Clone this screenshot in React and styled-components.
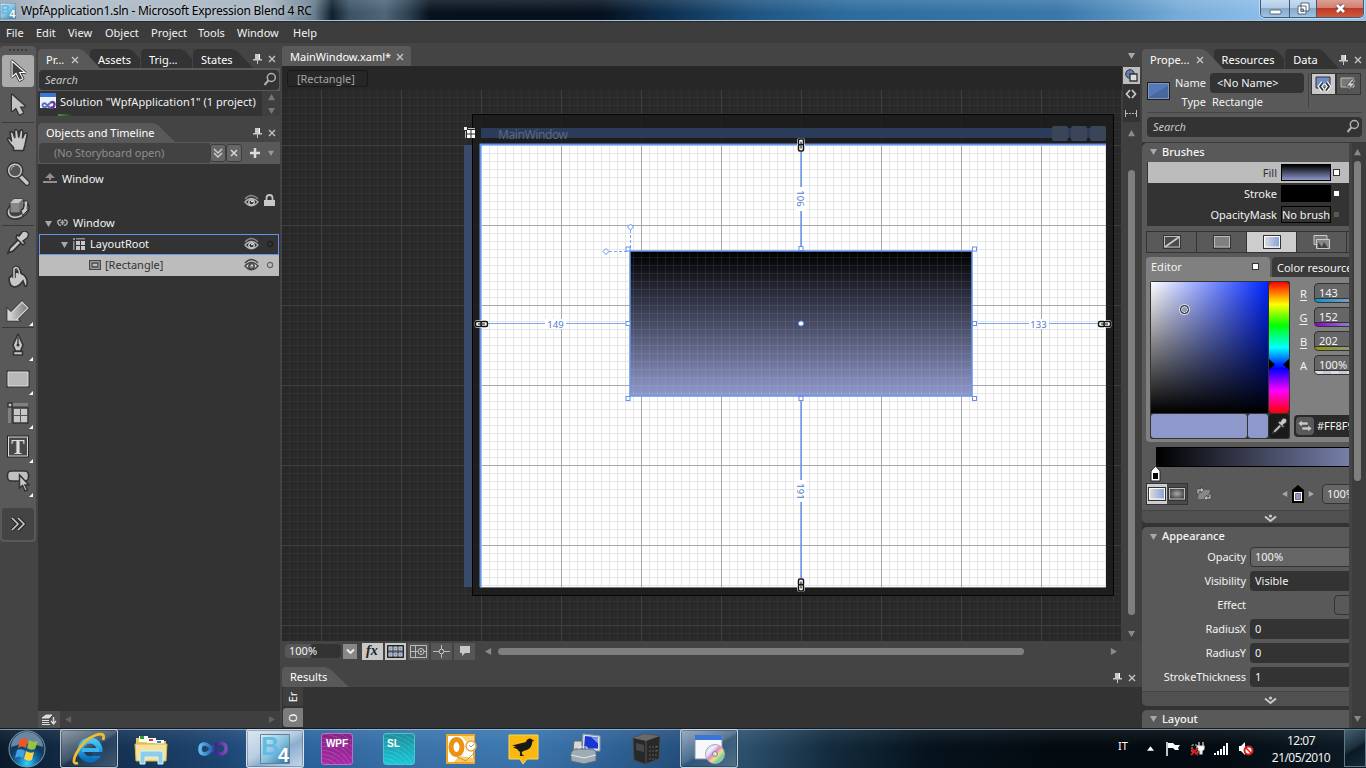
import React from "react";
import styled, { createGlobalStyle, css } from "styled-components";

const Global = createGlobalStyle`
  * { box-sizing: border-box; }
  body { margin: 0; background: #444; overflow: hidden; }
  svg { display: block; flex: none; }
`;

const c = {
  base: "#444444",
  panel: "#595959",
  dark: "#333333",
  light: "#bcbcbc",
  text: "#f2f2f2",
  blue: "#6494ed",
};

const Shell = styled.div`
  width: 1366px;
  height: 768px;
  display: flex;
  flex-direction: column;
  overflow: hidden;
  background: ${c.base};
  color: ${c.text};
  font-family: "Noto Sans", "Open Sans", sans-serif;
  font-size: 11px;
  line-height: 16px;
  white-space: nowrap;
`;

/* ---------- title bar ---------- */
const TitleBar = styled.header`
  height: 22px;
  flex: none;
  display: flex;
  align-items: flex-start;
  border-bottom: 1px solid #202a33;
  box-shadow: inset 0 -1px 0 #b3c1cc;
  background:
    linear-gradient(rgba(255, 255, 255, 0.12), rgba(255, 255, 255, 0) 60%),
    linear-gradient(90deg, #91a2b2 0, #aebbc7 60px, #a3b1be 270px, #65798b 315px, #10202e 332px, #3d5366 350px, #4e6678 385px, #2d4252 408px, #07121d 430px, #05111e 600px, #0c2c4b 660px, #1f5480 750px, #2e6c9f 850px, #3a77aa 1060px, #5590bf 1120px, #78acd8 1180px, #91c3ef 1290px, #8cbdeb 1366px);
`;
const AppIcon = styled.div`
  padding-top: 3px;
`;
const AppTitle = styled.h1`
  margin: 3px auto 0 5px;
  font-size: 12px;
  font-weight: 400;
  line-height: 16px;
  letter-spacing: -0.24px;
  color: #000;
  text-shadow: 0 0 6px rgba(255, 255, 255, 0.7);
`;
const CaptionButtons = styled.div`
  display: flex;
  width: 104px;
  height: 18px;
  margin-right: 2px;
  border: 1px solid #43596e;
  border-top: 0;
  border-radius: 0 0 5px 5px;
  overflow: hidden;
  box-shadow: 0 0 0 1px rgba(220, 238, 255, 0.6);
`;
const CaptionButton = styled.div`
  width: ${(p) => p.$w}px;
  display: flex;
  align-items: center;
  justify-content: center;
  border-left: ${(p) => (p.$first ? 0 : "1px solid #43596e")};
  background: ${(p) =>
    p.$close
      ? "linear-gradient(#dca096, #d08070 45%, #bd3a24 50%, #cf5a3b)"
      : "linear-gradient(#c8dcf0, #b1cce6 45%, #86aacb 50%, #9dc3e5)"};
`;

/* ---------- menu ---------- */
const MenuBar = styled.nav`
  height: 21px;
  flex: none;
  display: grid;
  grid-template-columns: 30px 32px 37px 46px 47px 39px 56px 40px;
  padding: 3px 0 0 6px;
  background: #3c3c3c;
`;

const Body = styled.div`
  height: 685px;
  flex: none;
  display: flex;
`;

/* ---------- tool strip ---------- */
const Tools = styled.aside`
  width: 38px;
  padding-top: 3px;
`;
const ToolStrip = styled.div`
  width: 36px;
  height: 496px;
  background: ${c.panel};
  border-radius: 4px;
  display: flex;
  flex-direction: column;
  align-items: center;
  padding-top: 3px;
`;
const Grip = styled.div`
  width: 18px;
  height: 2px;
  margin: 0 0 4px;
  background: repeating-linear-gradient(90deg, #3a3a3a 0 2px, transparent 2px 4px);
`;
const Tool = styled.div`
  width: 32px;
  height: ${(p) => p.$h || 34}px;
  margin-top: ${(p) => p.$top || 0}px;
  flex: none;
  display: flex;
  align-items: center;
  justify-content: center;
  position: relative;
  border-radius: 3px;
  background: ${(p) => (p.$active ? "#ababab" : p.$more ? "#444" : "transparent")};
  ${(p) =>
    p.$flyout &&
    css`
      &::after {
        content: "";
        position: absolute;
        right: 1px;
        bottom: 1px;
        border: 2.5px solid transparent;
        border-right-color: #fff;
        border-bottom-color: #fff;
      }
    `}
`;
const ToolRule = styled.div`
  width: 32px;
  height: 1px;
  flex: none;
  background: #3a3a3a;
`;

/* ---------- shared panel parts ---------- */
const TabRow = styled.div`
  display: flex;
  align-items: flex-end;
  height: ${(p) => p.$h}px;
  flex: none;
`;
const Tab = styled.div`
  width: ${(p) => p.$w}px;
  height: ${(p) => p.$h || 19}px;
  padding: ${(p) => p.$top || 3}px 0 0 ${(p) => p.$pad || 8}px;
  margin-right: ${(p) => p.$gap || 0}px;
  position: relative;
  z-index: ${(p) => (p.$active ? 1 : 0)};
  color: #fff;
  background: ${(p) => (p.$active ? c.panel : "#333")};
  display: flex;
  gap: 7px;
  clip-path: polygon(
    0 4px, 1px 1px, 4px 0,
    calc(100% - ${(p) => p.$slant}px - 4px) 0,
    calc(100% - ${(p) => p.$slant}px + 1px) 2px,
    100% ${(p) => (p.$slant > 10 ? "100%" : "10px")},
    100% 100%, 0 100%
  );
`;
const PanelTools = styled.div`
  display: flex;
  align-items: center;
  gap: 6px;
  height: 19px;
  margin-left: auto;
  padding-right: ${(p) => p.$r || 4}px;
`;
const SearchBox = styled.div`
  height: 20px;
  flex: none;
  display: flex;
  align-items: center;
  justify-content: space-between;
  padding: 0 2px 1px 6px;
  margin-top: ${(p) => p.$top || 0}px;
  border-radius: 4px;
  background: ${c.dark};
  color: #c8c8c8;
  font-style: italic;
`;

/* ---------- left column ---------- */
const Left = styled.section`
  width: 242px;
  display: flex;
  flex-direction: column;
  flex: none;
`;
const SearchWrap = styled.div`
  background: ${c.panel};
  padding: 2px 1px 1px;
  flex: none;
`;
const SolutionRow = styled.div`
  height: 25px;
  flex: none;
  display: flex;
  background: ${c.dark};
`;
const SolutionItem = styled.div`
  width: 224px;
  height: 25px;
  display: flex;
  gap: 4px;
  padding: 2px 0 0 2px;
  background: linear-gradient(90deg, #3f9a2c, #333) 20px 100% / 14px 2px no-repeat;
  span { padding-top: 1px; letter-spacing: 0.04px; }
`;
const SpinColumn = styled.div`
  flex: 1;
  background: #3f3f3f;
  display: flex;
  flex-direction: column;
  align-items: center;
  gap: 6px;
  padding-top: 3px;
`;
const Storyboard = styled.div`
  height: 22px;
  flex: none;
  background: ${c.panel};
  padding: 1px 6px 1px 1px;
  display: flex;
  align-items: center;
`;
const StoryName = styled.div`
  width: 171px;
  height: 20px;
  background: #424242;
  border-radius: 4px 0 0 4px;
  color: #8e8e8e;
  padding: 2px 0 0 15px;
  letter-spacing: -0.05px;
`;
const StoryButton = styled.div`
  width: 16px;
  height: 18px;
  display: flex;
  align-items: center;
  justify-content: center;
  border: 1px solid #3d3d3d;
  border-radius: 3px;
  background: #666;
`;
const Tree = styled.div`
  flex: 1;
  background: ${c.dark};
  padding: 4px 1px 0;
`;
const TreeRow = styled.div`
  display: flex;
  align-items: center;
  gap: ${(p) => p.$gap || 5}px;
  padding: 0 ${(p) => p.$right || 4}px ${(p) => p.$lift || 0}px ${(p) => p.$indent}px;
  border: ${(p) => (p.$outline ? `1px solid ${c.blue}` : "0")};
  background: ${(p) => (p.$active ? c.light : "transparent")};
  color: ${(p) => (p.$active ? "#333" : c.text)};
  height: ${(p) => p.$h || 21}px;
`;
const RowEnd = styled.div`
  margin-left: auto;
  display: flex;
  align-items: center;
  gap: ${(p) => p.$gap || 6}px;
`;
const LeftFoot = styled.div`
  height: 17px;
  flex: none;
  display: flex;
  align-items: center;
  justify-content: space-between;
  background: #3f3f3f;
  padding-right: 5px;
`;
const FootStart = styled.div`
  display: flex;
  align-items: center;
  gap: 5px;
`;
const FootButton = styled.div`
  width: 22px;
  height: 17px;
  background: #505050;
  display: flex;
  align-items: center;
  justify-content: center;
`;

/* ---------- center ---------- */
const Center = styled.main`
  width: 860px;
  margin-left: 2px;
  flex: none;
  display: flex;
  flex-direction: column;
`;
const DocArea = styled.div`
  display: flex;
  height: 598px;
  flex: none;
`;
const Doc = styled.div`
  width: 840px;
  flex: none;
  display: flex;
  flex-direction: column;
`;
const DocTab = styled.div`
  width: 129px;
  height: 20px;
  margin-top: 3px;
  padding: 3px 0 0 8px;
  border-radius: 2px 3px 0 0;
  background: ${c.panel};
  color: #fff;
  display: flex;
  gap: 5px;
`;
const Crumbs = styled.div`
  height: 24px;
  padding: 4px 5px;
  background: #272727;
`;
const Crumb = styled.div`
  width: 81px;
  height: 17px;
  border: 1px solid #191919;
  border-radius: 3px;
  color: #a4a4a4;
  line-height: 16px;
  padding-left: 9px;
  letter-spacing: -0.05px;
`;
const ViewStrip = styled.div`
  flex: 1;
  display: flex;
  flex-direction: column;
  align-items: center;
  background: linear-gradient(${c.base} 23px, #404040 23px);
  padding: 9px 2px 4px 0;
`;
const ViewButtons = styled.div`
  margin: 8px 0 8px;
`;
const ViewButton = styled.div`
  width: 17px;
  height: ${(p) => p.$h}px;
  flex: none;
  display: flex;
  align-items: center;
  justify-content: center;
  background: ${(p) => (p.$on ? "#bdbdbd" : "#333")};
`;
const VThumb = styled.div`
  width: 7px;
  height: ${(p) => p.$h}px;
  margin: ${(p) => p.$top}px 0 auto;
  flex: none;
  border-radius: 4px;
  background: #7f7f7f;
`;
const HThumb = styled.div`
  width: 526px;
  height: 7px;
  margin: 0 86px 0 6px;
  border-radius: 4px;
  background: #7f7f7f;
`;
const CanvasBar = styled.div`
  height: 20px;
  flex: none;
  display: flex;
  align-items: center;
  padding-left: 3px;
`;
const ZoomBox = styled.div`
  width: 56px;
  height: 14px;
  border-radius: 4px;
  padding-left: 4px;
  line-height: 14px;
  background: linear-gradient(90deg, #575757 25px, #333 27px);
`;
const BarButton = styled.div`
  width: ${(p) => p.$w || 21}px;
  height: ${(p) => p.$h || 17}px;
  margin: 0 ${(p) => p.$mr || 0}px 0 ${(p) => p.$ml || 2}px;
  display: flex;
  align-items: center;
  justify-content: center;
  background: ${(p) => (p.$on ? "#c8c8c8" : p.$drop ? "#888" : "#565656")};
`;
const ResultsBody = styled.div`
  flex: 1;
  display: flex;
  flex-direction: column;
  gap: 2px;
  padding-left: 1px;
  background: ${c.dark};
`;
const SideTab = styled.div`
  width: 20px;
  height: 19px;
  display: flex;
  align-items: center;
  justify-content: center;
  border-radius: 3px 0 0 3px;
  background: ${(p) => (p.$on ? "#7c7c7c" : "#3f3f3f")};
  color: #fff;
  span { transform: rotate(-90deg); font-size: 11px; line-height: 10px; }
`;

/* ---------- right column ---------- */
const Right = styled.section`
  width: 224px;
  flex: none;
  display: flex;
  flex-direction: column;
`;
const Identity = styled.div`
  height: 73px;
  flex: none;
  background: ${c.panel};
  padding: 4px 4px 0 5px;
`;
const IdentityTop = styled.div`
  height: 40px;
  display: flex;
  border-bottom: 1px solid #444;
`;
const TypeSwatch = styled.div`
  width: 23px;
  height: 18px;
  margin-top: 9px;
  border: 1px solid #1d1d1d;
  box-shadow: inset 0 0 0 1px #8194bd;
  background: linear-gradient(150deg, #5379b9 50%, #49679f 52%);
`;
const NameGrid = styled.div`
  display: grid;
  grid-template-columns: 36px 94px;
  grid-template-rows: 21px 17px;
  column-gap: 4px;
  text-align: right;
  line-height: 20px;
  & > :nth-child(even) { text-align: left; }
  & > :nth-child(n + 3) { line-height: 16px; }
  & > :nth-child(4) { padding-left: 2px; }
`;
const NameInput = styled.div`
  height: 20px;
  border-radius: 4px;
  background: ${c.dark};
  padding-left: 7px;
`;
const Modes = styled.div`
  display: flex;
  margin-left: 4px;
  padding-left: 2px;
  height: 35px;
  border-left: 1px solid #444;
`;
const Mode = styled.div`
  width: 25px;
  height: 22px;
  display: flex;
  align-items: center;
  justify-content: center;
  border: 1px solid #353535;
  background: ${(p) => (p.$on ? "#c9c9c9" : "#555")};
`;
const PropScroll = styled.div`
  flex: 1;
  min-height: 0;
  display: flex;
  border-top: 1px solid #3a3a3a;
`;
const Props = styled.div`
  width: 207px;
  flex: none;
  overflow: hidden;
  background: ${c.dark};
`;
const ScrollRail = styled.div`
  width: 17px;
  background: linear-gradient(90deg, #444 3px, #3c3c3c 3px);
  display: flex;
  flex-direction: column;
  align-items: center;
  padding: 6px 0 6px;
`;
const Section = styled.div`
  height: ${(p) => p.$h}px;
  margin-bottom: 4px;
  border-radius: 5px 0 0 5px;
  background: ${c.panel};
  overflow: hidden;
`;
const SectionHead = styled.div`
  height: ${(p) => p.$h || 19}px;
  display: flex;
  align-items: center;
  gap: 5px;
  padding: 0 0 2px 8px;
  color: #f5f5f5;
  font-weight: 500;
`;
const BrushList = styled.div`
  margin-left: 5px;
  height: 64px;
  border-left: 1px solid #333;
  background: ${c.dark};
`;
const BrushRow = styled.div`
  height: 21px;
  display: flex;
  align-items: center;
  justify-content: flex-end;
  gap: 4px;
  padding-right: 9px;
  background: ${(p) => (p.$on ? c.light : "transparent")};
  color: ${(p) => (p.$on ? "#333" : c.text)};
`;
const BrushWell = styled.div`
  width: 50px;
  height: 17px;
  border: 1px solid #000;
  background: ${(p) => p.$bg};
  color: #f2f2f2;
  text-align: center;
  line-height: 15px;
`;
const Marker = styled.div`
  width: 7px;
  height: 7px;
  margin-left: -2px;
  border: 1px solid #333;
  background: ${(p) => (p.$off ? "#595959" : "#fff")};
`;
const BrushTabs = styled.div`
  height: 22px;
  width: 230px;
  margin: 5px 0 4px 4px;
  display: flex;
  background: #333;
  padding: 1px;
  gap: 1px;
`;
const BrushTab = styled.div`
  width: 49px;
  flex: none;
  display: flex;
  align-items: center;
  justify-content: center;
  background: ${(p) => (p.$on ? "#cdcdcd" : "#595959")};
`;
const EditorTabs = styled.div`
  display: flex;
  height: 20px;
  margin-left: 4px;
  gap: 2px;
`;
const EditorTab = styled.div`
  width: 124px;
  flex: none;
  padding: ${(p) => (p.$on ? 0 : 2)}px 11px ${(p) => (p.$on ? 1 : 0)}px 5px;
  border-radius: 4px 4px 0 0;
  background: ${(p) => (p.$on ? "#808080" : "#3a3a3a")};
  display: flex;
  align-items: center;
  justify-content: space-between;
`;
const Editor = styled.div`
  height: 165px;
  margin-left: 4px;
  padding: 4px 0 0 4px;
  border-radius: 0 0 0 4px;
  background: #808080;
  display: flex;
`;
const Picker = styled.div`
  width: 140px;
  height: 158px;
  flex: none;
  display: grid;
  grid-template-columns: 117px 20px;
  grid-template-rows: 131px 24px;
  gap: 1px;
  padding: 1px;
  background: #333;
  border-radius: 2px;
`;
const Spectrum = styled.div`
  position: relative;
  background: linear-gradient(transparent, #000), linear-gradient(90deg, #fff, #0026ff);
`;
const PickRing = styled.div`
  position: absolute;
  left: 29px;
  top: 23px;
  width: 9px;
  height: 9px;
  border: 1.5px solid #222;
  border-radius: 50%;
  box-shadow: 0 0 0 1px #ddd, inset 0 0 0 1px #ddd;
`;
const Hue = styled.div`
  border-radius: 4px;
  background: linear-gradient(#f00, #ff0 17%, #0f0 33%, #0ff 50%, #00f 66%, #f0f 83%, #f00);
  display: flex;
  justify-content: space-between;
  padding-top: 77px;
`;
const Swatches = styled.div`
  display: grid;
  grid-template-columns: 96px 20px;
  gap: 1px;
`;
const Swatch = styled.div`
  border-radius: 3px;
  background: #8f98ca;
`;
const Dropper = styled.div`
  border-radius: 3px;
  background: #1a1a1a;
  display: flex;
  align-items: center;
  justify-content: center;
`;
const Channels = styled.div`
  margin-left: 4px;
  padding-top: 2px;
  display: flex;
  flex-direction: column;
  gap: 4px;
`;
const Channel = styled.div`
  display: flex;
  height: 20px;
  width: 90px;
  line-height: 21px;
  span {
    width: 20px;
    text-align: center;
    padding-right: 1px;
    text-decoration: ${(p) => (p.$plain ? "none" : "underline")};
    text-underline-offset: 2px;
  }
`;
const ChannelValue = styled.div`
  flex: 1;
  padding-left: 4px;
  line-height: 18px;
  border: 1px solid #333;
  border-radius: 4px;
  background: linear-gradient(#666 14px, #333 14px, #333 15px, transparent 15px), ${(p) => p.$bar};
`;
const HexRow = styled.div`
  width: 90px;
  height: 22px;
  margin-top: auto;
  margin-bottom: 5px;
  display: flex;
  align-items: center;
  gap: 3px;
  padding: 1px 2px;
  border-radius: 4px;
  background: #2a2a2a;
`;
const HexIcon = styled.div`
  width: 18px;
  height: 18px;
  border-radius: 4px;
  background: #595959;
  display: flex;
  align-items: center;
  justify-content: center;
`;
const GradientBar = styled.div`
  height: 20px;
  width: 266px;
  margin: 5px 0 0 14px;
  border: 1px solid #000;
  background: linear-gradient(90deg, #000, #8f98ca 230px);
`;
const Stops = styled.div`
  height: 16px;
  padding-left: 8px;
  margin-top: -1px;
`;
const GradientTools = styled.div`
  width: 320px;
  height: 22px;
  display: flex;
  align-items: center;
  padding-left: 4px;
  gap: 8px;
  margin-top: 1px;
`;
const Segmented = styled.div`
  display: flex;
  flex: none;
  width: 42px;
  height: 22px;
  padding: 1px;
  background: #333;
`;
const Segment = styled.div`
  flex: 1;
  display: flex;
  align-items: center;
  justify-content: center;
  background: ${(p) => (p.$on ? "#cdcdcd" : "#4a4a4a")};
`;
const StopNav = styled.div`
  display: flex;
  align-items: center;
  gap: 4px;
  margin-left: 62px;
`;
const Field = styled.div`
  width: 130px;
  height: 20px;
  flex: none;
  padding-left: ${(p) => (p.$plain ? 5 : 4)}px;
  line-height: ${(p) => (p.$plain ? 20 : 18)}px;
  border-radius: 4px;
  border: ${(p) => (p.$plain ? "0" : "1px solid #333")};
  background: ${(p) => (p.$plain ? c.dark : p.$bg || "#666")};
  margin-left: ${(p) => p.$ml || 0}px;
`;
const Expander = styled.div`
  height: ${(p) => p.$h}px;
  margin-top: ${(p) => p.$top}px;
  padding: 1px 0 0 50px;
  display: flex;
  align-items: center;
  justify-content: center;
  border-top: 1px solid #444;
  background: #505050;
`;
const PropRow = styled.div`
  display: flex;
  height: 20px;
  margin-bottom: 4px;
  gap: 4px;
  label { width: 104px; flex: none; text-align: right; line-height: 20px; letter-spacing: -0.08px; }
`;

/* ---------- task bar ---------- */
const TaskBar = styled.footer`
  height: 40px;
  flex: none;
  display: flex;
  border-top: 1px solid #111c27;
  box-shadow: inset 0 1px 0 rgba(190, 215, 235, 0.6);
  background:
    linear-gradient(rgba(255, 255, 255, 0.08), transparent 45%, rgba(0, 0, 0, 0.05)),
    linear-gradient(90deg, #0a1b2c 0, #112a43 60px, #163456 125px, #1e4674 220px, #2c659f 310px, #3b73aa 400px, #3c78b0 520px, #306398 610px, #244e79 690px, #2d506d 745px, #132c3e 830px, #06131d 930px, #030a10 1060px, #030b12 1220px, #0d1c26 1366px);
`;
const StartSlot = styled.div`
  width: 60px;
  padding: 1px 0 0 8px;
`;
const TaskButton = styled.div`
  width: 58px;
  height: 39px;
  margin-right: 4px;
  display: flex;
  align-items: center;
  justify-content: center;
  border-radius: 3px;
  ${(p) =>
    p.$state &&
    css`
      border: 1px solid rgba(220, 235, 250, 0.75);
      box-shadow: inset 0 0 0 1px rgba(0, 0, 0, 0.25);
      background: ${p.$state === "active"
        ? "linear-gradient(150deg, #dce7f2, #b8cde2 45%, #8dadce 60%, #c4d8ec)"
        : "linear-gradient(150deg, rgba(255,255,255,.5), rgba(255,255,255,.2) 48%, rgba(255,255,255,.06) 54%, rgba(255,255,255,.2))"};
    `}
`;
const AppTile = styled.div`
  width: 32px;
  height: 32px;
  border-radius: 3px;
  border: 1px solid ${(p) => p.$edge};
  background: repeating-radial-gradient(circle at 0 44px, transparent 0 3px, rgba(255, 255, 255, 0.12) 3px 4px), ${(p) => p.$bg};
  color: #fff;
  font: bold 10px/19px "Liberation Sans", sans-serif;
  text-align: ${(p) => p.$align || "center"};
  padding-left: ${(p) => (p.$align ? 3 : 0)}px;
`;
const Tray = styled.div`
  margin-left: auto;
  width: 151px;
  display: flex;
  align-items: center;
  color: #fff;
  font-size: 11px;
`;
const Lang = styled.span`
  width: 29px;
  margin-top: -6px;
`;
const TrayIcons = styled.div`
  display: flex;
  align-items: center;
  gap: 9px;
  & > :nth-child(2) { margin-left: 3px; }
`;
const Clock = styled.div`
  width: 64px;
  padding-top: 3px;
  text-align: center;
  line-height: 17px;
  letter-spacing: -0.55px;
  font-size: 12px;
`;
const ShowDesktop = styled.div`
  width: 22px;
  height: 38px;
  margin-left: 11px;
  border: 1px solid #607887;
  background: linear-gradient(150deg, #48606f, #1e323f 45%, #0b1a24 55%, #162a36);
`;

/* ---------- icons ---------- */
const Close = ({ s = 8, col = "#c4c4c4" }) => (
  <svg width={s} height="16" viewBox="0 0 8 16"><path d="M1 5l6 6M7 5l-6 6" stroke={col} strokeWidth="1.4" fill="none" /></svg>
);
const Pin = () => (
  <svg width="9" height="12" viewBox="0 0 9 12"><path d="M2 1h5v5H2zM0 6h9v1.5H0zM4 7h1v4H4z" fill="#c8c8c8" /><path d="M6 1h1v5H6z" fill="#fff" /></svg>
);
const Tri = ({ d = "down", col = "#a8a8a8", s = 7 }) => {
  const paths = { down: "M0 1h8L4 8z", up: "M0 7h8L4 0z", left: "M7 0v8L0 4z", right: "M1 0v8l7-4z" };
  return <svg width={s} height={s} viewBox="0 0 8 8"><path d={paths[d]} fill={col} /></svg>;
};
const HueArrow = ({ flip }) => (
  <svg width="6" height="11" viewBox="0 0 6 11"><path d={flip ? "M6 0v11L0 5.500z" : "M0 0v11l6-5.500z"} fill="#000" /></svg>
);
const Lens = () => (
  <svg width="14" height="15" viewBox="0 0 14 15" fill="none" stroke="#b0b0b0" strokeWidth="1.5"><circle cx="8.3" cy="5.5" r="4" /><path d="M5.3 8.5L1.5 13" strokeWidth="2" /></svg>
);
const Eye = ({ on }) => (
  <svg width="15" height="14" viewBox="0 0 15 14">
    <path d="M1 5Q7.500-2 14 5" fill="none" stroke={on ? "#444" : "#8a8a8a"} strokeWidth="1.300" />
    <path d="M1 8Q7.500 1 14 8Q7.500 15.500 1 8z" fill={on ? "#dadada" : "#2c2c2c"} stroke={on ? "#444" : "#b4b4b4"} strokeWidth="1.400" />
    <circle cx="7.500" cy="8.300" r="3.400" fill={on ? "#484848" : "#c4c4c4"} />
    <circle cx="7.500" cy="8.300" r="1.900" fill={on ? "#888" : "#333"} />
    <circle cx="8" cy="7.300" r="0.900" fill="#fff" />
  </svg>
);
const Lock = () => (
  <svg width="11" height="13" viewBox="0 0 11 13"><path d="M2.500 6V4a3 3 0 016 0v2" fill="none" stroke="#c4c4c4" strokeWidth="1.800" /><path d="M0 6h11v6H0z" fill="#c8c8c8" /></svg>
);
const Dot = ({ col }) => (
  <svg width="8" height="8" viewBox="0 0 8 8"><circle cx="4" cy="4" r="2.600" fill="none" stroke={col} strokeWidth="1.200" /></svg>
);
const LayoutGrid = () => (
  <svg width="12" height="12" viewBox="0 0 12 12"><path d="M0 0h2v2H0zM3 0h9v1.500H3zM0 3h1.500v9H0z" fill="#909090" /><path d="M3 3h4v4H3zM8 3h4v4H8zM3 8h4v4H3zM8 8h4v4H8z" fill="#c8c8c8" /></svg>
);
const Chev = () => (
  <svg width="13" height="9" viewBox="0 0 13 9"><path d="M1 2.500L6.500 7 12 2.500" fill="none" stroke="#c8c8c8" strokeWidth="2" /><circle cx="6.500" cy="2" r="1.600" fill="#c8c8c8" /></svg>
);
const DropChev = () => (
  <svg width="9" height="7" viewBox="0 0 9 7"><path d="M1 1.500l3.500 3.500L8 1.500" fill="none" stroke="#f0f0f0" strokeWidth="1.800" /></svg>
);
const Arrow = ({ dark }) => (
  <svg width="20" height="26" viewBox="0 0 20 26">
    <path d="M4 3v16l4-3.500 3.500 7 3.500-1.800-3.300-6.200H17z" fill={dark ? "#333" : "#c4c4c4"} stroke={dark ? "#222" : "#333"} strokeWidth="2.600" strokeLinejoin="round" />
    <path d="M4 3v16l4-3.500 3.500 7 3.500-1.800-3.300-6.200H17z" fill={dark ? "#404040" : "#c4c4c4"} stroke={dark ? "#fff" : "none"} strokeWidth="1.100" />
  </svg>
);
const HandIcon = () => (
  <svg width="24" height="26" viewBox="0 0 24 26"><path d="M7.500 23.500v-3q-4-4-6-8 0-2.500 3-.5L5.500 14 4 6q.500-2.500 3-.5l1.800 5L8.500 4q1.500-3 3.300 0l1 6 1.200-6q2-2.500 3 .5l-.5 6.500 2-4.500q2.500-1.500 2.700 1L19 18l-1.500 5.500z" fill="#c8c8c8" stroke="#333" strokeWidth="1.600" strokeLinejoin="round" /></svg>
);
const ZoomIcon = () => (
  <svg width="24" height="24" viewBox="0 0 24 24"><path d="M12 12l9 9" stroke="#333" strokeWidth="6" strokeLinecap="round" /><path d="M14 14l7 7" stroke="#c8c8c8" strokeWidth="3.500" strokeLinecap="round" /><circle cx="9" cy="8.500" r="7" fill="#606060" stroke="#333" strokeWidth="3" /><circle cx="9" cy="8.500" r="6.300" fill="#555" stroke="#c8c8c8" strokeWidth="1.500" /><path d="M5 8a4 4 0 014-4" stroke="#aaa" fill="none" /></svg>
);
const CameraIcon = () => (
  <svg width="24" height="24" viewBox="0 0 24 24"><ellipse cx="12" cy="14" rx="10.500" ry="7" fill="#444" stroke="#333" strokeWidth="4" transform="rotate(-28 12 14)" /><ellipse cx="12" cy="14" rx="10" ry="6.500" fill="#444" stroke="#c8c8c8" strokeWidth="1.800" transform="rotate(-28 12 14)" /><path d="M4 7l4-4h9v8l-4 6H4z" fill="#888" stroke="#333" /><path d="M4 7l4-4h9l-4 4z" fill="#c8c8c8" /><path d="M13 7l4-4v8l-4 6z" fill="#777" /><path d="M18 5h4l-1 8 1.500.5-6 6-1.500-6h2q2-3 1-8.500z" fill="#c8c8c8" stroke="#333" /></svg>
);
const DropperIcon = ({ s = 24 }) => (
  <svg width={s} height={s} viewBox="0 0 24 24"><path d="M2 22l2-5L13 8l3 3-9 9z" fill="#c8c8c8" stroke="#303030" strokeWidth="1.700" /><path d="M10 7l7 7 2-2-2-2 4-3q3-4 0-6t-5 0l-3 4-2-1z" fill="#c8c8c8" stroke="#303030" strokeWidth="1.500" /></svg>
);
const BucketIcon = () => (
  <svg width="24" height="24" viewBox="0 0 24 24"><path d="M3 13l8-7 7 4q4 4 3 10-1 3-2.500 0L17 16q-4 6-9 6-5-1-5-9z" fill="#c8c8c8" stroke="#333" strokeWidth="1.700" /><path d="M8 13V4q1.500-3 4-1 2 2 2 6" fill="none" stroke="#333" strokeWidth="3.500" /><path d="M8 13V4q1.500-2.500 3.500-1 2 2 2 6" fill="none" stroke="#d0d0d0" strokeWidth="1.500" /></svg>
);
const GradientTool = () => (
  <svg width="24" height="24" viewBox="0 0 24 24"><defs><linearGradient id="gt"><stop offset="0" stopColor="#ddd" /><stop offset="1" stopColor="#777" /></linearGradient></defs><path d="M2 21V11l3 3L16 3l6 6-11 11 1 1z" fill="url(#gt)" stroke="#333" strokeWidth="3" /><path d="M2 21V11l3 3L16 3l6 6-11 11 1 1z" fill="url(#gt)" stroke="#d0d0d0" strokeWidth="1.300" /></svg>
);
const PenIcon = () => (
  <svg width="18" height="24" viewBox="0 0 18 24"><path d="M9 1l5 11-2.500 6h-5L4 12zM4.500 18.500h9v3.500h-9z" fill="#c8c8c8" stroke="#333" strokeWidth="1.600" /><path d="M9 4v7" stroke="#333" strokeWidth="1.300" /><circle cx="9" cy="12" r="1.500" fill="#333" /></svg>
);
const RectTool = () => (
  <svg width="24" height="18" viewBox="0 0 24 18"><path d="M2 2h20v14H2z" fill="#b8b8b8" stroke="#333" strokeWidth="3" /><path d="M2 2h20v14H2z" fill="#b8b8b8" stroke="#ddd" /></svg>
);
const GridTool = () => (
  <svg width="24" height="24" viewBox="0 0 24 24"><path d="M6 2h16v3H6zM2 6h3v16H2z" fill="#808080" /><path d="M2 2h4v4H2zM7 7h15v15H7z" fill="#c8c8c8" stroke="#333" strokeWidth="1.500" /><path d="M14.500 7v15M7 14.500h15" stroke="#555" /></svg>
);
const TextTool = () => (
  <svg width="22" height="24" viewBox="0 0 22 24"><rect x="1" y="1.500" width="20" height="20" fill="#494949" stroke="#222" strokeWidth="2" /><rect x="1.500" y="2" width="19" height="19" fill="#494949" stroke="#ddd" /><text x="11" y="18.500" textAnchor="middle" fontFamily="Liberation Serif" fontWeight="bold" fontSize="20" fill="#ddd">T</text></svg>
);
const ButtonTool = () => (
  <svg width="24" height="24" viewBox="0 0 24 24"><rect x="1.500" y="2" width="21" height="10" rx="4" fill="#c0c0c0" stroke="#333" strokeWidth="1.600" /><path d="M13.500 6v13l3-2.500L19 22l2.500-1-2.500-5h4z" fill="#c8c8c8" stroke="#333" strokeWidth="1.500" /></svg>
);
const BrushIcon = ({ kind }) => (
  <svg width="18" height="14" viewBox="0 0 18 14">
    <defs><linearGradient id="bg1"><stop offset="0" stopColor="#ddd" /><stop offset="1" stopColor="#86a2d8" /></linearGradient><radialGradient id="bg2"><stop offset="0" stopColor="#aaa" /><stop offset="1" stopColor="#4b4b4b" /></radialGradient></defs>
    <rect x=".5" y=".5" width="17" height="13" fill="none" stroke="#333" />
    <rect x="1.500" y="1.500" width="15" height="10.500" fill={{ none: "#4a4a4a", solid: "#808080", linear: "url(#bg1)", radial: "url(#bg2)" }[kind]} stroke={kind === "linear" ? "#fff" : "#bbb"} />
    {kind === "none" && <path d="M2 12L16 2" stroke="#c8c8c8" strokeWidth="1.800" />}
  </svg>
);
const TileIcon = () => (
  <svg width="18" height="16" viewBox="0 0 18 16"><path d="M1 1.500h13v9H1z" fill="#777" stroke="#ccc" /><path d="M3.500 5.500h13v9h-13z" fill="#888" stroke="#ccc" /><path d="M5 14V8l4 5 2-5 4 6z" fill="#444" /></svg>
);

/* ---------- design surface ---------- */
const Surface = () => {
  const link = (x, y, r) => (
    <g transform={`translate(${x} ${y}) rotate(${r})`}>
      <rect x="-7" y="-4" width="14" height="8" rx="3" fill="#fff" opacity=".8" />
      <rect x="-6" y="-2.500" width="6.500" height="5" rx="1.500" fill="#fff" stroke="#111" strokeWidth="1.500" />
      <rect x="-.5" y="-2.500" width="6.500" height="5" rx="1.500" fill="#fff" stroke="#111" strokeWidth="1.500" />
      <path d="M-3.500 0h7" stroke="#222" strokeWidth="1.200" />
    </g>
  );
  const handles = [[628, 249], [801, 248.5], [974.5, 249], [628, 323.5], [974.5, 323.5], [628, 398.5], [801, 398.5], [974.5, 398.5]];
  return (
    <svg width="840" height="551" viewBox="282 90 840 551">
      <defs>
        <pattern id="dm" x="1" y="1" width="8" height="8" patternUnits="userSpaceOnUse"><path d="M.5 0v8M0 .5h8" stroke="#323232" /></pattern>
        <pattern id="dM" x="1" y="65" width="80" height="80" patternUnits="userSpaceOnUse"><path d="M.5 0v80M0 .5h80" stroke="#404040" /></pattern>
        <pattern id="wm" x="1" y="1" width="8" height="8" patternUnits="userSpaceOnUse"><path d="M.5 0v8M0 .5h8" stroke="#e6e6e6" /></pattern>
        <pattern id="wM" x="1" y="65" width="80" height="80" patternUnits="userSpaceOnUse"><path d="M.5 0v80M0 .5h80" stroke="#a6a6ac" /></pattern>
        <linearGradient id="fill" x2="0" y2="1"><stop stopColor="#000" /><stop offset="1" stopColor="#8f98ca" /></linearGradient>
      </defs>
      <rect x="282" y="90" width="840" height="551" fill="#292929" />
      <rect x="282" y="90" width="840" height="551" fill="url(#dm)" />
      <rect x="282" y="90" width="840" height="551" fill="url(#dM)" />
      <rect x="472.500" y="114.500" width="641" height="481" fill="#1a1a1a" fillOpacity=".75" stroke="#050505" />
      <rect x="481" y="128" width="625" height="10" fill="#2b3b5a" />
      <rect x="464" y="145" width="8" height="442" fill="#3a4a6a" />
      <text x="498" y="139" fontSize="12" fill="#5d6880" textLength="70">MainWindow</text>
      {[1052, 1071, 1090].map((x) => <rect key={x} x={x} y="126" width="16" height="15" rx="2" fill="#3b4558" />)}
      <rect x="480" y="144" width="626" height="444" fill="#777" />
      <rect x="481" y="145" width="625" height="442" fill="#fff" />
      <rect x="481" y="145" width="625" height="442" fill="url(#wm)" />
      <rect x="482" y="146" width="624" height="441" fill="url(#wM)" />
      <path d="M480.500 587V144.500H1106" fill="none" stroke="#6494ed" strokeWidth="2" />
      <rect x="630" y="251" width="342" height="145" fill="url(#fill)" stroke={c.blue} strokeWidth="1.500" />
      <g stroke="#ffffff" strokeOpacity=".07">
        {Array.from({ length: 42 }, (_, i) => <path key={i} d={`M${633.5 + i * 8} 252v144`} />)}
        {Array.from({ length: 18 }, (_, i) => <path key={i} d={`M630 ${257.5 + i * 8}h342`} />)}
      </g>
      <g fill="none" stroke="#7ea4ee">
        <path d="M801 150v98M801 401v180" strokeWidth="1.500" stroke="#6c98ee" />
        <path d="M487 323.500h138M978 323.500h122" />
        <path d="M630.500 230v18M609 251.500h18" strokeDasharray="3 2" />
      </g>
      <path d="M796 187h10v24h-10zM796 480h10v22h-10zM545 319h21v10h-21zM1029 319h20v10h-20z" fill="#fff" />
      <path d="M630.500 224l3 3-3 3-3-3zM606 248.500l3 3-3 3-3-3z" fill="#fff" stroke={c.blue} />
      {handles.map(([x, y]) => <rect key={`${x}-${y}`} x={x - 2} y={y - 2} width="4" height="4" fill="#fff" stroke={c.blue} />)}
      <circle cx="801" cy="323.500" r="2.500" fill="#fff" stroke={c.blue} />
      <g fontSize="9.500" fill="#4f7bd0" textAnchor="middle">
        <text x="555.500" y="327.500">149</text><text x="1038.500" y="327.500">133</text>
        <text transform="translate(797 198.500) rotate(90)">106</text><text transform="translate(797 491.500) rotate(90)">191</text>
      </g>
      {link(801, 145, 90)}{link(801, 585, 90)}{link(481.5, 324, 0)}{link(1104.5, 324, 0)}
      <path d="M465 128h10v10h-10z" fill="#282828" /><path d="M464 127h3v3h-3z" fill="#eee" /><path d="M468 128.500h7M465.500 131v7" stroke="#bbb" /><path d="M467 130h3.500v3.500H467zM471.500 130h3.500v3.500h-3.500zM467 134.500h3.500v3.500H467zM471.500 134.500h3.500v3.500h-3.500z" fill="#fff" />
    </svg>
  );
};

/* ---------- task bar drawings ---------- */
const StartOrb = () => (
  <svg width="38" height="38" viewBox="0 0 38 38"><defs><radialGradient id="orb" cy=".9"><stop stopColor="#30d5ff" /><stop offset=".5" stopColor="#1676b5" /><stop offset="1" stopColor="#123a5e" /></radialGradient></defs><circle cx="19" cy="19" r="18" fill="url(#orb)" stroke="#809cae" /><path d="M3 17a16 15 0 0132 0q-16-7-32 0z" fill="#c1d4df" opacity=".5" /><path d="M12 9q4-2 8 1l-2 8q-4-3-8 0z" fill="#e9572a" /><path d="M21 10q4 3 9 1l-3 8q-4 2-8-1z" fill="#96c241" /><path d="M9 20q4-2 8 1l-2 7q-4-3-8 0z" fill="#42a2e3" /><path d="M18 21q4 3 8 1l-2 8q-4 2-8-1z" fill="#fbd33c" /></svg>
);
const IeIcon = () => (
  <svg width="34" height="34" viewBox="0 0 34 34"><defs><linearGradient id="ie" x2="0" y2="1"><stop stopColor="#49c6f4" /><stop offset="1" stopColor="#0870c0" /></linearGradient></defs><circle cx="18" cy="18" r="9.500" fill="none" stroke="url(#ie)" strokeWidth="6" /><path d="M10 16h17v4H10z" fill="#35b5f2" /><path d="M21 20h11v4H21z" fill="#234b70" /><path d="M6 31Q-1 33 4 22 12 7 24 3q10-3 7 5" fill="none" stroke="#f2bd2f" strokeWidth="2.800" /></svg>
);
const FolderIcon = () => (
  <svg width="34" height="32" viewBox="0 0 34 32"><path d="M2 5h11l2 3h17v20H2z" fill="#e8c85e" /><path d="M5 3h9v6H5z" fill="#fff" /><path d="M6 3h4v3H6z" fill="#29a329" /><path d="M13 5h9v5h-9z" fill="#fff" /><path d="M15 6h4v2h-4z" fill="#d33" /><path d="M21 7h9v5h-9z" fill="#fff" /><path d="M23 8h4v2h-4z" fill="#258ddb" /><path d="M1 11h32l-1 17H2z" fill="#f6e39a" stroke="#d7b54b" /><path d="M6 31V20q0-2 2-2h18q3 0 3 2v11h-5v-7H11v7z" fill="#8ecdea" stroke="#d4f3fc" /></svg>
);
const InfinityIcon = () => (
  <svg width="32" height="18" viewBox="0 0 32 18"><defs><linearGradient id="inf"><stop stopColor="#62b9eb" /><stop offset=".4" stopColor="#2a76b9" /><stop offset=".6" stopColor="#40208c" /><stop offset="1" stopColor="#7d50b8" /></linearGradient></defs><path d="M3 9C3 3 9 2.500 13 7l5 4.500c4 4 11 3 11-3s-7-7-11-3l-5 5.500C9 15.500 3 15 3 9z" fill="none" stroke="url(#inf)" strokeWidth="3.600" /></svg>
);
const BlendIcon = ({ s = 30 }) => (
  <svg width={s} height={s} viewBox="0 0 30 30"><defs><linearGradient id="blend" x2="1" y2="1"><stop offset="0" stopColor="#d8eef7" /><stop offset=".5" stopColor="#8cc4e0" /><stop offset="1" stopColor="#1b6fa8" /></linearGradient></defs><path d="M.5.5h29v29H.5z" fill="url(#blend)" stroke="#667f91" /><text x="1" y="21" fontFamily="Liberation Sans" fontWeight="bold" fontSize="25" fill="#62bbe2">B</text><text x="18" y="28" fontFamily="Liberation Sans" fontWeight="bold" fontSize="20" fill="#fff">4</text></svg>
);
const OutlookIcon = () => (
  <svg width="31" height="30" viewBox="0 0 31 30"><path d="M1 1h27v28H1z" fill="#fff" stroke="#eea528" strokeWidth="2" /><path d="M15 2h13v14z" fill="#fbd577" /><ellipse cx="10.500" cy="13" rx="5.500" ry="7.500" fill="none" stroke="#eb9212" strokeWidth="5" /><path d="M8 28l5-6 15 2v4z" fill="#f8c869" /><path d="M11 23l9 4 8-8" stroke="#db9328" fill="none" /><circle cx="25" cy="12" r="5" fill="#fff" stroke="#eda638" strokeWidth="1.500" /><path d="M23 11l2 2 3-3" stroke="#999" fill="none" /></svg>
);
const BirdIcon = () => (
  <svg width="31" height="30" viewBox="0 0 31 30"><path d="M1 1h29v24H19l-4 5-3-5H1z" fill="#f9b90d" stroke="#ffd655" /><path d="M4 11.500l10-2.500q2.500-.5 4-1c.5-2 2-3.500 4-3.500q2 0 2.500 1.500l2 1-2.300.5c0 5-3 8.500-7.500 9l-3 1.500.5 2.500 2 1.500h-4.500l.5-2-.5-2.500q-1.500-.5-2.500-2.500L5 13.500l3-1z" fill="#181818" /></svg>
);
const ToolsIcon = () => (
  <svg width="32" height="32" viewBox="0 0 32 32"><path d="M14 1l17 2v15H13z" fill="#d9dfe4" stroke="#8d98a1" /><path d="M16 3l13 1.500v11H15z" fill="#1736d4" /><path d="M22 4l7 .5v6z" fill="#7f96ee" /><path d="M5 8h8v10H4z" fill="#d8d8d8" stroke="#666" /><path d="M2 19l4-3h18l3 3v9l-12 3-13-3z" fill="#9dacb4" stroke="#5d686f" /><path d="M2 22l13 3 12-3M10 16v-2h8v2" fill="none" stroke="#e5ebee" /></svg>
);
const ServerIcon = () => (
  <svg width="30" height="32" viewBox="0 0 30 32"><path d="M1 5l11-4 16 2-1 23-14 5L2 27z" fill="#282828" stroke="#484848" /><path d="M1 5l11-4 16 2-14 5z" fill="#696969" /><path d="M14 8v22" stroke="#555" /><path d="M4 10l8 2v7l-8-2z" fill="#484848" /><path d="M17 14h8M17 18h8M17 22h8M17 26h7" stroke="#596159" strokeDasharray="2 1" /><path d="M25 13v8" stroke="#36b936" strokeDasharray="1 3" /></svg>
);
const SetupIcon = () => (
  <svg width="31" height="32" viewBox="0 0 31 32"><defs><linearGradient id="cd" x2="1" y2="1"><stop stopColor="#9edcf7" /><stop offset=".3" stopColor="#eef" /><stop offset=".45" stopColor="#d88ad1" /><stop offset=".6" stopColor="#f8df80" /><stop offset=".75" stopColor="#71d49b" /><stop offset="1" stopColor="#b8b8df" /></linearGradient></defs><path d="M1 2h27v24H1z" fill="#f7f8fa" stroke="#8391a0" /><path d="M1 2h27v5H1z" fill="#3974d8" /><circle cx="21" cy="21" r="9.500" fill="url(#cd)" stroke="#aaa" /><circle cx="21" cy="21" r="2.500" fill="#ddd" stroke="#888" /></svg>
);

const App = () => (
  <Shell>
    <Global />
    <TitleBar>
      <AppIcon><BlendIcon s={16} /></AppIcon>
      <AppTitle>WpfApplication1.sln - Microsoft Expression Blend 4 RC</AppTitle>
      <CaptionButtons>
        <CaptionButton $w={28} $first><svg width="13" height="12" viewBox="0 0 13 12"><rect x="1" y="7" width="11" height="4" rx="1" fill="#fff" stroke="#566575" /></svg></CaptionButton>
        <CaptionButton $w={27}><svg width="13" height="13" viewBox="0 0 13 13"><path d="M4 1h8v8H4zM1 4h8v8H1z" fill="#fff" stroke="#566575" /><path d="M4 7h2.500v2.500H4z" fill="#a0bad2" stroke="#566575" /></svg></CaptionButton>
        <CaptionButton $w={47} $close><svg width="13" height="11" viewBox="0 0 13 11"><path d="M3 2l7 7M10 2L3 9" stroke="#67464a" strokeWidth="4.500" /><path d="M3 2l7 7M10 2L3 9" stroke="#fff" strokeWidth="2.700" /></svg></CaptionButton>
      </CaptionButtons>
    </TitleBar>
    <MenuBar>
      {["File", "Edit", "View", "Object", "Project", "Tools", "Window", "Help"].map((m) => <span key={m}>{m}</span>)}
    </MenuBar>

    <Body>
      <Tools>
        <ToolStrip>
          <Grip />
          <Tool $active $h={32}><Arrow dark /></Tool>
          <Tool $h={35}><Arrow /></Tool>
          <ToolRule />
          <Tool><HandIcon /></Tool><Tool><ZoomIcon /></Tool><Tool><CameraIcon /></Tool>
          <ToolRule />
          <Tool $h={34}><DropperIcon /></Tool><Tool><BucketIcon /></Tool><Tool $flyout $h={33}><GradientTool /></Tool>
          <ToolRule />
          <Tool $flyout><PenIcon /></Tool><Tool $flyout><RectTool /></Tool><Tool $flyout><GridTool /></Tool><Tool $flyout><TextTool /></Tool><Tool $flyout><ButtonTool /></Tool>
          <Tool $more $h={32} $top={10}><svg width="16" height="18" viewBox="0 0 16 18"><path d="M2 3l6 6-6 6M8 3l6 6-6 6" fill="none" stroke="#222" strokeWidth="3.500" /><path d="M2 3l6 6-6 6M8 3l6 6-6 6" fill="none" stroke="#c8c8c8" strokeWidth="1.600" /></svg></Tool>
        </ToolStrip>
      </Tools>

      <Left>
        <TabRow $h={25}>
          <Tab $w={62} $active $slant={17} $gap={-10}>Pr...<Close /></Tab>
          <Tab $w={50} $slant={8} $gap={1}>Assets</Tab>
          <Tab $w={51} $slant={8} $gap={1}>Trig...</Tab>
          <Tab $w={60} $slant={17}>States</Tab>
          <PanelTools><Pin /><Close /></PanelTools>
        </TabRow>
        <SearchWrap><SearchBox>Search<Lens /></SearchBox></SearchWrap>
        <SolutionRow>
          <SolutionItem>
            <svg width="16" height="16" viewBox="0 0 16 16"><path d="M0 0h16v15H0z" fill="#eef3fa" /><path d="M0 0h16v4H0z" fill="#3777d6" /><path d="M2.500 12.500q0-3 3-2l4 4q5 1 5-3t-4-2l-4 4q-3 2-4-1z" fill="none" stroke="#5a6fc4" strokeWidth="2" /><path d="M11 9.500q4-1 3.500 2.500-1 3-4 2.500" fill="none" stroke="#6e2fa0" strokeWidth="2" /></svg>
            <span>Solution "WpfApplication1" (1 project)</span>
          </SolutionItem>
          <SpinColumn><Tri d="up" col="#777" /><Tri col="#777" /></SpinColumn>
        </SolutionRow>
        <TabRow $h={26}>
          <Tab $w={137} $active $slant={18} $top={2}>Objects and Timeline</Tab>
          <PanelTools><Pin /><Close /></PanelTools>
        </TabRow>
        <Storyboard>
          <StoryName>(No Storyboard open)</StoryName>
          <StoryButton><svg width="10" height="11" viewBox="0 0 10 11"><path d="M1 1l4 4 4-4M1 5l4 4 4-4" fill="none" stroke="#ccc" strokeWidth="1.500" /></svg></StoryButton>
          <StoryButton><Close s={10} col="#ddd" /></StoryButton>
          <RowEnd $gap={8}><svg width="10" height="10" viewBox="0 0 10 10"><path d="M5 0v10M0 5h10" stroke="#ddd" strokeWidth="2.500" /></svg><Tri s={6} col="#999" /></RowEnd>
        </Storyboard>
        <Tree>
          <TreeRow $indent={4}><svg width="14" height="12" viewBox="0 0 14 12"><path d="M7 0l5 5H8v2H6V5H2zM0 8h14v2H0z" fill="#909090" /></svg>Window</TreeRow>
          <TreeRow $indent={4} $h={23} $right={4}><RowEnd $gap={5}><Eye /><Lock /></RowEnd></TreeRow>
          <TreeRow $indent={6} $h={22}><Tri /><svg width="11" height="8" viewBox="0 0 11 8"><path d="M4 1q-4 0-3 3t3 2M7 1q4 0 3 3t-3 2M3.500 3.500h4M5.500 1v5" fill="none" stroke="#aaa" strokeWidth="1.500" /></svg>Window</TreeRow>
          <TreeRow $indent={21} $outline $lift={1}><Tri /><LayoutGrid /><span>LayoutRoot</span><RowEnd $gap={7}><Eye /><Dot col="#1d1d1d" /></RowEnd></TreeRow>
          <TreeRow $indent={50} $active $gap={4} $lift={2} $right={5}><svg width="12" height="10" viewBox="0 0 12 10"><path d="M.7.7h10.600v8.600H.7zM3 3h6v4H3z" fill="none" stroke="#444" strokeWidth="1.300" /></svg>[Rectangle]<RowEnd $gap={7}><Eye on /><Dot col="#666" /></RowEnd></TreeRow>
        </Tree>
        <LeftFoot><FootStart><FootButton><svg width="16" height="12" viewBox="0 0 16 12"><path d="M1 4l4-3h6L8 4zM1 6.500h7M1 8.500h7M1 10.500h8" fill="#ddd" stroke="#ddd" /><path d="M12.500 3v6m-2.500-2l2.500 3L15 7" fill="none" stroke="#ddd" strokeWidth="1.400" /></svg></FootButton><Tri d="left" col="#616161" /></FootStart><Tri d="right" col="#616161" /></LeftFoot>
      </Left>

      <Center>
        <DocArea>
          <Doc>
            <DocTab>MainWindow.xaml*<Close /></DocTab>
            <Crumbs><Crumb>[Rectangle]</Crumb></Crumbs>
            <Surface />
          </Doc>
          <ViewStrip>
            <Tri />
            <ViewButtons>
              <ViewButton $on $h={17}><svg width="13" height="13" viewBox="0 0 13 13"><circle cx="5" cy="5" r="4.300" fill="#5c7fbe" stroke="#333" /><path d="M5 5h7v7H5z" fill="#ddd" stroke="#333" strokeWidth="1.300" /></svg></ViewButton>
              <ViewButton $h={20}><svg width="12" height="10" viewBox="0 0 12 10"><path d="M5 1L1.500 5 5 9M7 1l3.500 4L7 9" fill="none" stroke="#ccc" strokeWidth="1.700" /></svg></ViewButton>
              <ViewButton $h={18}><svg width="12" height="7" viewBox="0 0 12 7"><path d="M.5 0v7M11.500 0v7" fill="none" stroke="#bbb" /><path d="M1 3.500h10" stroke="#bbb" strokeDasharray="2 1" /></svg></ViewButton>
            </ViewButtons>
            <Tri d="up" col="#8b8b8b" />
            <VThumb $h={445} $top={33} />
            <Tri col="#8b8b8b" />
          </ViewStrip>
        </DocArea>
        <CanvasBar>
          <ZoomBox>100%</ZoomBox>
          <BarButton $w={14} $h={15} $drop><DropChev /></BarButton>
          <BarButton $on $ml={5}><svg width="16" height="14" viewBox="0 0 16 14"><text x="1" y="11" fontFamily="Liberation Serif" fontStyle="italic" fontWeight="bold" fontSize="14" fill="#222">fx</text></svg></BarButton>
          <BarButton $on><svg width="17" height="13" viewBox="0 0 17 13"><path d="M.5.5h16v12H.5z" fill="#555" stroke="#222" /><path d="M2 2h3v3H2zM7 2h3v3H7zM12 2h3v3h-3zM2 8h3v3H2zM7 8h3v3H7zM12 8h3v3h-3z" fill="#7195dd" stroke="#ddd" strokeWidth=".7" /></svg></BarButton>
          <BarButton><svg width="17" height="13" viewBox="0 0 17 13"><path d="M.5.500h16v12H.5zM5.500 0v13M0 6.500h17" fill="none" stroke="#bbb" /><circle cx="11" cy="6.500" r="3" fill="#555" stroke="#ccc" /><circle cx="11" cy="6.500" r="1" fill="#ccc" /></svg></BarButton>
          <BarButton><svg width="17" height="13" viewBox="0 0 17 13"><path d="M0 6.500h6M11 6.500h6M8.500 0v4M8.500 9v4" stroke="#bbb" /><circle cx="8.500" cy="6.500" r="2.300" fill="none" stroke="#ccc" /></svg></BarButton>
          <BarButton $mr={10}><svg width="12" height="12" viewBox="0 0 12 12"><path d="M1 1h10v7H6l-3 3V8H1z" fill="#c8c8c8" /></svg></BarButton>
          <Tri d="left" col="#8b8b8b" /><HThumb /><Tri d="right" col="#8b8b8b" />
        </CanvasBar>
        <TabRow $h={26}><Tab $w={67} $active $slant={20} $h={20} $top={2}>Results</Tab><PanelTools $r={6}><Pin /><Close /></PanelTools></TabRow>
        <ResultsBody><SideTab><span>Er</span></SideTab><SideTab $on><span>O</span></SideTab></ResultsBody>
      </Center>

      <Right>
        <TabRow $h={26}>
          <Tab $w={82} $h={20} $active $slant={18} $gap={-10}>Prope...<Close /></Tab>
          <Tab $w={71} $h={20} $slant={8} $gap={1}>Resources</Tab>
          <Tab $w={54} $h={20} $slant={17}>Data</Tab>
          <PanelTools><Pin /><Close /></PanelTools>
        </TabRow>
        <Identity>
          <IdentityTop>
            <TypeSwatch />
            <NameGrid><span>Name</span><NameInput>&lt;No Name&gt;</NameInput><span>Type</span><span>Rectangle</span></NameGrid>
            <Modes>
              <Mode $on><svg width="17" height="17" viewBox="0 0 17 17"><path d="M1 1h14v11H1z" fill="#6e8dc6" stroke="#333" /><path d="M8 6.500L5 10.500l3 4M11 6.500l3 4-3 4" fill="none" stroke="#fff" strokeWidth="4" /><path d="M8 6.500L5 10.500l3 4M11 6.500l3 4-3 4" fill="none" stroke="#333" strokeWidth="1.800" /></svg></Mode>
              <Mode><svg width="17" height="17" viewBox="0 0 17 17"><path d="M1 2h13v9H1z" fill="#777" stroke="#bbb" /><path d="M12 3L6 10h4l-3 6 8-9h-4l4-4z" fill="#ccc" stroke="#444" strokeWidth=".8" /></svg></Mode>
            </Modes>
          </IdentityTop>
          <SearchBox $top={4}>Search<Lens /></SearchBox>
        </Identity>
        <PropScroll>
          <Props>
            <Section $h={380}>
              <SectionHead><Tri />Brushes</SectionHead>
              <BrushList>
                <BrushRow $on>Fill<BrushWell $bg="linear-gradient(#000, #8f98ca)" /><Marker /></BrushRow>
                <BrushRow>Stroke<BrushWell $bg="#000" /><Marker /></BrushRow>
                <BrushRow>OpacityMask<BrushWell $bg="#333">No brush</BrushWell><Marker $off /></BrushRow>
              </BrushList>
              <BrushTabs><BrushTab><BrushIcon kind="none" /></BrushTab><BrushTab><BrushIcon kind="solid" /></BrushTab><BrushTab $on><BrushIcon kind="linear" /></BrushTab><BrushTab><TileIcon /></BrushTab><BrushTab /></BrushTabs>
              <EditorTabs><EditorTab $on>Editor<Marker /></EditorTab><EditorTab>Color resources</EditorTab></EditorTabs>
              <Editor>
                <Picker>
                  <Spectrum><PickRing /></Spectrum>
                  <Hue><HueArrow /><HueArrow flip /></Hue>
                  <Swatches><Swatch /><Swatch /></Swatches>
                  <Dropper><DropperIcon s={17} /></Dropper>
                </Picker>
                <Channels>
                  <Channel><span>R</span><ChannelValue $bar="linear-gradient(90deg, #0098ca, #ff98ca)">143</ChannelValue></Channel>
                  <Channel><span>G</span><ChannelValue $bar="linear-gradient(90deg, #8f00ca, #8fffca)">152</ChannelValue></Channel>
                  <Channel><span>B</span><ChannelValue $bar="linear-gradient(90deg, #8f9800, #8f98ff)">202</ChannelValue></Channel>
                  <Channel $plain><span>A</span><ChannelValue $bar="repeating-linear-gradient(90deg, #ddd 0 8px, #c5c9da 8px 16px)">100%</ChannelValue></Channel>
                  <HexRow><HexIcon><svg width="14" height="12" viewBox="0 0 14 12"><path d="M0 3.500L4 0v2h6v3H4v2zM14 8.500L10 5v2H4v3h6v2z" fill="#c8c8c8" stroke="#444" strokeWidth=".5" /></svg></HexIcon>#FF8F98CA</HexRow>
                </Channels>
              </Editor>
              <GradientBar />
              <Stops><svg width="11" height="16" viewBox="0 0 11 16"><path d="M5.500 0L10 5v10H1V5z" fill="#fff" stroke="#222" /><path d="M3 7h5v6H3z" fill="#000" /></svg></Stops>
              <GradientTools>
                <Segmented><Segment $on><BrushIcon kind="linear" /></Segment><Segment><BrushIcon kind="radial" /></Segment></Segmented>
                <svg width="16" height="16" viewBox="0 0 16 16"><path d="M3 4h11l-2 9H2z" fill="#888" /><path d="M1 8V3h4V1l3 3-3 3V5H3v3zM15 8v5h-4v2l-3-3 3-3v2h2V8z" fill="#bbb" stroke="#333" strokeWidth=".6" /></svg>
                <StopNav><Tri d="left" s={6} /><svg width="12" height="18" viewBox="0 0 12 18"><path d="M6 0l6 5v13H0V5z" fill="#000" /><path d="M2 7h8v9H2z" fill="#fff" /><path d="M3.500 8.500h5v6h-5z" fill="#8f98ca" stroke="#555" strokeWidth=".7" /></svg><Tri d="right" s={6} /></StopNav>
                <Field>100%</Field>
              </GradientTools>
              <Expander $top={5} $h={14}><Chev /></Expander>
            </Section>
            <Section $h={179}>
              <SectionHead $h={20}><Tri />Appearance</SectionHead>
              <PropRow><label>Opacity</label><Field>100%</Field></PropRow>
              <PropRow><label>Visibility</label><Field $plain>Visible</Field></PropRow>
              <PropRow><label>Effect</label><Field $bg="#595959" $ml={84} /></PropRow>
              <PropRow><label>RadiusX</label><Field $plain>0</Field></PropRow>
              <PropRow><label>RadiusY</label><Field $plain>0</Field></PropRow>
              <PropRow><label>StrokeThickness</label><Field $plain>1</Field></PropRow>
              <Expander $top={2} $h={16}><Chev /></Expander>
            </Section>
            <Section $h={30}><SectionHead><Tri />Layout</SectionHead></Section>
          </Props>
          <ScrollRail><Tri d="up" col="#888" /><VThumb $h={320} $top={5} /><Tri col="#888" /></ScrollRail>
        </PropScroll>
      </Right>
    </Body>

    <TaskBar>
      <StartSlot><StartOrb /></StartSlot>
      <TaskButton $state="open"><IeIcon /></TaskButton>
      <TaskButton><FolderIcon /></TaskButton>
      <TaskButton><InfinityIcon /></TaskButton>
      <TaskButton $state="active"><BlendIcon /></TaskButton>
      <TaskButton><AppTile $bg="linear-gradient(#872386, #a72aa5)" $edge="#c86ac5">WPF</AppTile></TaskButton>
      <TaskButton><AppTile $bg="linear-gradient(#1c909b, #18c7d7)" $edge="#48c5ce" $align="left">SL</AppTile></TaskButton>
      <TaskButton><OutlookIcon /></TaskButton>
      <TaskButton><BirdIcon /></TaskButton>
      <TaskButton><ToolsIcon /></TaskButton>
      <TaskButton><ServerIcon /></TaskButton>
      <TaskButton $state="open"><SetupIcon /></TaskButton>
      <Tray>
        <Lang>IT</Lang>
        <TrayIcons>
          <svg width="7" height="5" viewBox="0 0 8 5"><path d="M0 5l4-5 4 5z" fill="#fff" /></svg>
          <svg width="15" height="15" viewBox="0 0 15 15"><path d="M1 1v14" stroke="#fff" strokeWidth="1.500" /><path d="M2 2h5l2 2h5l-2 3 1 2H9L7 7H2z" fill="#fff" /></svg>
          <svg width="15" height="16" viewBox="0 0 15 16"><path d="M2 4h6v8H2z" fill="none" stroke="#bbb" strokeDasharray="2 1" /><path d="M9 1v4M13 1v4M7 5h7v3l-2 2v3h-2v-3L7 8z" fill="#fff" stroke="#ddd" strokeWidth="1.200" /><path d="M1 7l7 7M8 7l-7 7" stroke="#e01818" strokeWidth="2" /></svg>
          <svg width="15" height="13" viewBox="0 0 15 13"><path d="M0 11h2v2H0zM3 9h2v4H3zM6 7h2v6H6zM9 4h2v9H9zM12 1h2v12h-2z" fill="#fff" /></svg>
          <svg width="16" height="15" viewBox="0 0 16 15"><path d="M1 5h2l4-4v13l-4-4H1z" fill="#fff" /><circle cx="10.500" cy="9.500" r="4" fill="#fff" stroke="#df1b1b" strokeWidth="2" /><path d="M7.500 6.500l6 6" stroke="#df1b1b" strokeWidth="1.500" /></svg>
        </TrayIcons>
      </Tray>
      <Clock><div>12:07</div><div>21/05/2010</div></Clock>
      <ShowDesktop />
    </TaskBar>
  </Shell>
);

export default App;
